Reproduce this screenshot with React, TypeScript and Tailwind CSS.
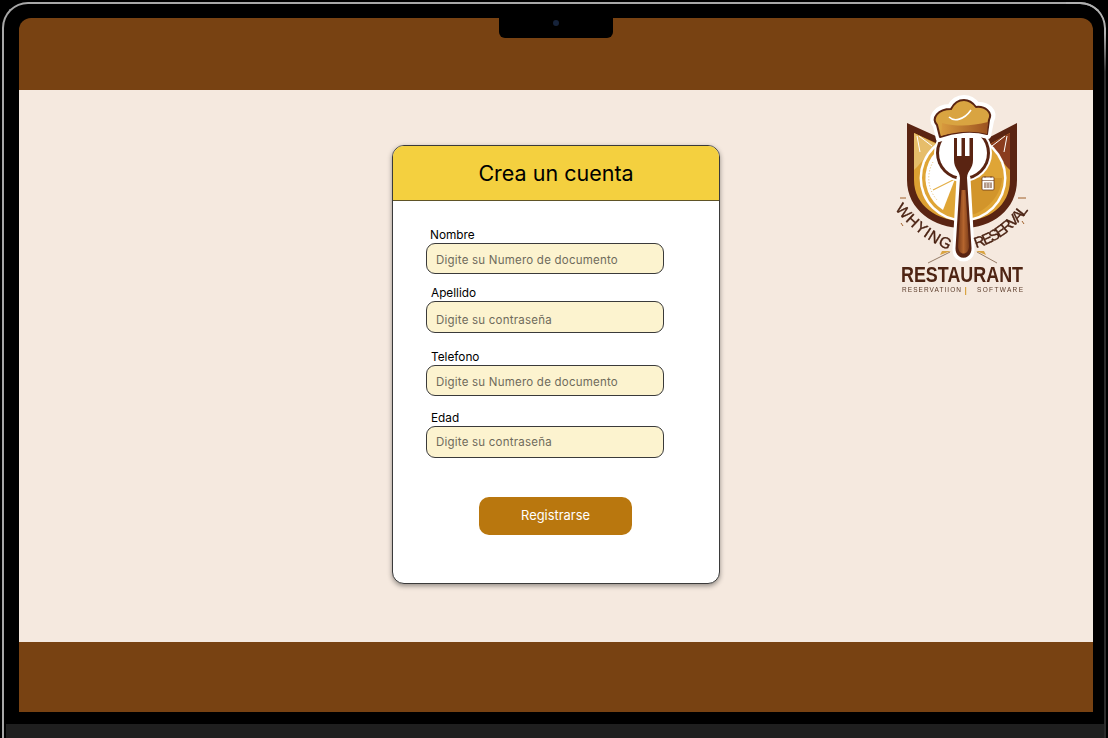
import React from "react";

const FONT = "font-['Inter','Liberation_Sans',sans-serif]";

const fields = [
  { label: "Nombre", placeholder: "Digite su Numero de documento", labelClass: "mt-0 ml-[4px]", inputClass: "h-[31px] pt-[3px]" },
  { label: "Apellido", placeholder: "Digite su contraseña", labelClass: "mt-[12px] ml-[5px]", inputClass: "h-[32px] pt-[5px]" },
  { label: "Telefono", placeholder: "Digite su Numero de documento", labelClass: "mt-[17px] ml-[5px]", inputClass: "h-[31px] pt-[3px]" },
  { label: "Edad", placeholder: "Digite su contraseña", labelClass: "mt-[15px] ml-[5px]", inputClass: "h-[32px]" },
];

// Restaurant badge: chef hat, fork, clock disc and shield
const Logo = () => (
  <svg width="200" height="215" viewBox="0 0 200 215" className="block">
    <defs>
      <linearGradient id="band" x1="0" x2="1" y1="0" y2="0">
        <stop offset="0" stopColor="#d99b3e" />
        <stop offset="1" stopColor="#9c5220" />
      </linearGradient>
      <linearGradient id="handle" x1="0" x2="1" y1="0" y2="0">
        <stop offset="0" stopColor="#7d3d1a" />
        <stop offset="0.5" stopColor="#b5652e" />
        <stop offset="1" stopColor="#7d3d1a" />
      </linearGradient>
      <path id="curveLeft" d="M35 119 C48 136 66 150 88 160" />
      <path id="curveRight" d="M116 158 C138 152 156 138 170 118" />
    </defs>
    <g filter="blur(0.35px)">
      {/* shield */}
      <path d="M47 33 L78 47 H130 L157 33 V90 C157 120 132 138 103 138 C74 138 47 120 47 90 Z" fill="#5a2412" />
      <path d="M54 43 L78 54 H130 L150 43 V90 C150 116 128 131 103 131 C78 131 54 116 54 90 Z" fill="#dca032" />
      <path d="M54 43 L76 54 L58 76 L54 80 Z" fill="#e6bd6a" />
      <path d="M150 43 L130 54 L146 76 L150 80 Z" fill="#8a3c1e" />
      <path d="M57 46 L60 62 M59 46 L72 56 M147 46 L144 62 M145 46 L132 56" stroke="#fff" strokeWidth="1" fill="none" />
      {/* disc */}
      <circle cx="103" cy="88" r="43.5" fill="#fff" />
      <circle cx="103" cy="88" r="41" fill="#dfa536" />
      <path d="M103 88 H142 C141 108 122 126 103 126 Z" fill="#c98a24" opacity="0.6" />
      <path d="M95 89 L83 120 A38 38 0 0 1 103 50 Z" fill="#fff" />
      <path d="M95 89 L73 100" stroke="#e3ae45" strokeWidth="1.2" />
      <path d="M73 72 A33 33 0 0 0 77 110" fill="none" stroke="#d9a441" strokeWidth="0.8" strokeDasharray="1 2" />
      {/* fork head ring */}
      <circle cx="103" cy="63" r="29" fill="#fff" />
      <circle cx="103" cy="63" r="27" fill="#5a2412" />
      <circle cx="103" cy="63" r="24" fill="#fff" />
      {/* fork */}
      <path d="M99 88 L95 160 C95 172 112 172 112 160 L108 88 Z" fill="#fff" stroke="#fff" strokeWidth="5" strokeLinejoin="round" />
      <path d="M94 48 H97 V66 H101.5 V48 H105 V66 H109.5 V48 H113 V70 C113 79 107.5 80 107 88 L111.5 158 C112 171 95 171 95.5 158 L100 88 C99.5 80 94 79 94 70 Z" fill="#5a2412" />
      <path d="M101.5 100 L98 156 C98 166 109 166 109 156 L105.5 100 Z" fill="url(#handle)" />
      {/* calendar */}
      <rect x="122" y="87" width="12" height="13" rx="1" fill="#fff" stroke="#6b3a1c" strokeWidth="0.8" />
      <path d="M122 90.5 H134 M124 93 H132 M124 95 H132 M124 97 H132 M125 93 V98 M128 93 V98 M131 93 V98 M125 86 V88 M131 86 V88" stroke="#6b3a1c" strokeWidth="0.6" />
      {/* chef hat */}
      <path d="M79 49 L76 36 C69 28 76 17 90 17 C93 11 98 8 104 8 C110 8 114 11 117 15 C127 14 136 21 131 31 L128 46 C112 41 94 44 79 49 Z" fill="#fff" stroke="#fff" strokeWidth="6" strokeLinejoin="round" />
      <path d="M80 47 L77 35 C71 28 78 19 91 19 C94 13 98 10 104 10 C109 10 113 13 116 17 C125 16 133 22 129 30 L127 44 C112 40 94 42 80 47 Z" fill="#d9a441" stroke="#5a2412" strokeWidth="2" strokeLinejoin="round" />
      <path d="M82 33 C98 37 112 36 128 32 L127 44 C112 40 94 42 81 46 Z" fill="url(#band)" />
      <path d="M89 27 C94 32 104 30 111 20" fill="none" stroke="#fff" strokeWidth="1.6" />
      {/* ribbon lettering */}
      <text fontFamily="'Liberation Sans',sans-serif" fontSize="15.5" fill="#4a2212" stroke="#4a2212" strokeWidth="0.35">
        <textPath href="#curveLeft" textLength="68">WHYING</textPath>
      </text>
      <text fontFamily="'Liberation Sans',sans-serif" fontSize="15" fill="#4a2212" stroke="#4a2212" strokeWidth="0.35">
        <textPath href="#curveRight" textLength="66">RESERVAL</textPath>
      </text>
      <path d="M40 108 H46 M158 108 H166 M41 133 L43 136 M162 131 L164 134" stroke="#a0602a" strokeWidth="1" />
      <path d="M68 173 L90 162 M137 173 L117 162" stroke="#6b4a30" strokeWidth="0.7" />
      <path d="M80 165 L91 161 L82 161 Z M126 165 L116 161 L124 161 Z" fill="#d9a441" />
      {/* wordmark */}
      <text x="41" y="191.5" fontFamily="'Liberation Sans',sans-serif" fontWeight="700" fontSize="21.5" fill="#4e2413" textLength="122" lengthAdjust="spacingAndGlyphs">RESTAURANT</text>
      <text x="42" y="201.5" fontFamily="'Liberation Sans',sans-serif" fontSize="6.5" fill="#5a3a28" textLength="59">RESERVATIION</text>
      <rect x="105" y="197" width="1.2" height="8" fill="#d9a441" />
      <text x="117" y="201.5" fontFamily="'Liberation Sans',sans-serif" fontSize="6.5" fill="#5a3a28" textLength="46">SOFTWARE</text>
    </g>
  </svg>
);

const App: React.FC = () => {
  return (
    <div className={`w-[1108px] h-[738px] bg-black overflow-hidden ${FONT}`}>
      <div className="relative h-[742px] mt-[2px] ml-[2px] mr-[2px] px-[15px] pt-[14px] flex flex-col rounded-t-[26px] border-2 border-[#a8a8a8] border-r-[#2c2c2c] border-b-0 bg-black">
        {/* Bright edge of the lid, fades out below the corner */}
        <div className="absolute -top-[2px] -right-[2px] w-[40px] h-[70px] rounded-tr-[26px] border-t-2 border-r-2 border-[#b0b0b0] [mask-image:linear-gradient(to_bottom,black_45%,transparent)]" />

        {/* Notch */}
        <div className="absolute left-[495px] top-0 w-[114px] h-[34px] bg-black rounded-b-[6px] flex items-center justify-center">
          <div className="w-[6px] h-[6px] rounded-full bg-[#16233a] mt-[4px]" />
        </div>

        {/* Screen */}
        <div className="w-[1074px] flex flex-col">
          <div className="h-[72px] bg-[#784212] rounded-t-[12px]" />

          <main className="h-[552px] bg-[#f5e9df] grid grid-cols-[1fr_328px_1fr]">
            <div />
            <section className="mt-[55px] h-[439px] bg-white border border-[#3a3a3a] rounded-[12px] shadow-[0_2px_5px_rgba(0,0,0,0.4)] overflow-hidden flex flex-col">
              <h1 className="h-[55px] shrink-0 bg-[#f4d03f] border-b border-[#5f5326] flex items-center justify-center text-[21.5px] text-black">
                Crea un cuenta
              </h1>
              <form className="flex flex-col pl-[33px] pt-[27px]">
                {fields.map((f) => (
                  <React.Fragment key={f.label}>
                    <label className={`text-[11.8px] leading-[14px] text-black mb-[1px] ${f.labelClass}`}>{f.label}</label>
                    <input
                      readOnly
                      placeholder={f.placeholder}
                      className={`w-[238px] ${f.inputClass} bg-[#fcf3cf] border border-[#3a3a3a] rounded-[9px] pl-[9px] text-[11.5px] tracking-[0.22px] outline-none placeholder:text-[#6f6b5c]`}
                    />
                  </React.Fragment>
                ))}
                <button
                  type="button"
                  className="mt-[39px] ml-[53px] w-[153px] h-[38px] bg-[#b9770e] rounded-[10px] text-white text-[12.9px]"
                >
                  Registrarse
                </button>
              </form>
            </section>
            <div className="flex justify-end pr-[33px]">
              <Logo />
            </div>
          </main>

          <div className="h-[70px] bg-[#784212]" />
        </div>

        {/* Base of the laptop */}
        <div className="mt-[12px] -ml-[13px] -mr-[15px] h-[20px] bg-[#1f1f1f]" />
      </div>
    </div>
  );
};

export default App;
